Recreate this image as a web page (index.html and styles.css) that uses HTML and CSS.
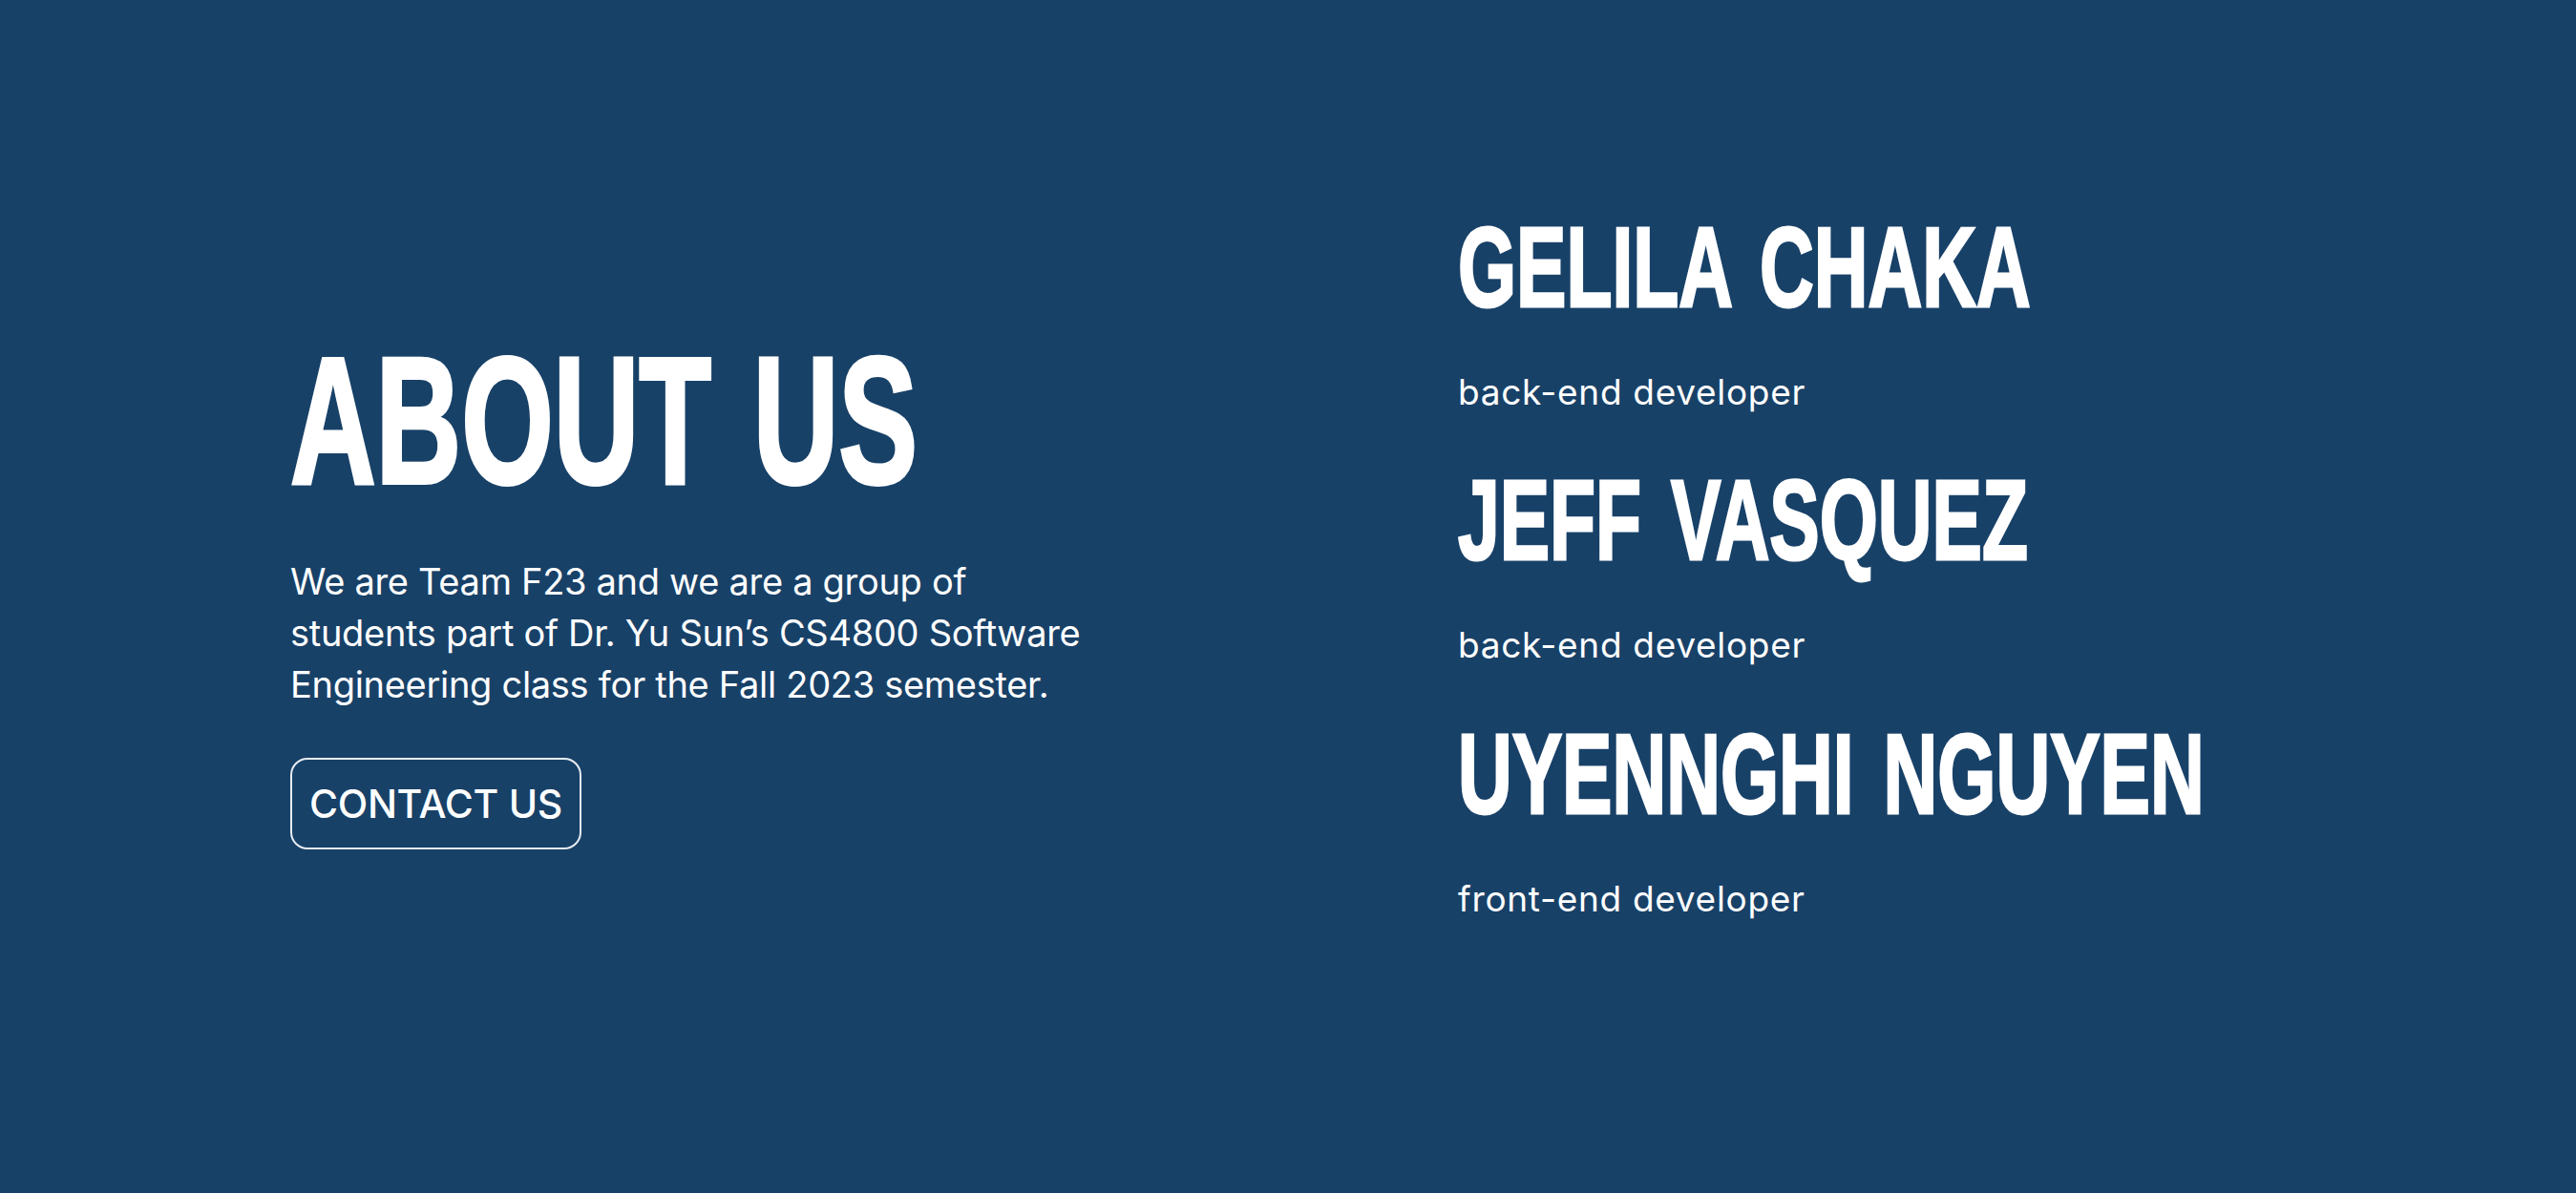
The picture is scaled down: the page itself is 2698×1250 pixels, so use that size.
FILE: index.html
```html
<!DOCTYPE html>
<html lang="en">
<head>
<meta charset="utf-8">
<title>About Us</title>
<link rel="stylesheet" href="styles.css">
</head>
<body>
<main class="about">
  <section class="intro">
    <h1 class="title"><span class="condensed">ABOUT US</span></h1>
    <p class="blurb">We are Team F23 and we are a group of students part of Dr. Yu Sun’s CS4800 Software Engineering class for the Fall 2023 semester.</p>
    <a class="contact" href="#">CONTACT US</a>
  </section>
  <section class="team">
    <div class="member">
      <h2 class="name"><span class="condensed">GELILA CHAKA</span></h2>
      <p class="role">back-end developer</p>
    </div>
    <div class="member">
      <h2 class="name"><span class="condensed">JEFF VASQUEZ</span></h2>
      <p class="role">back-end developer</p>
    </div>
    <div class="member">
      <h2 class="name"><span class="condensed">UYENNGHI NGUYEN</span></h2>
      <p class="role">front-end developer</p>
    </div>
  </section>
</main>
</body>
</html>
```
FILE: styles.css
```css
html, body {
  margin: 0;
  padding: 0;
}
body {
  background: #184168;
  color: #ffffff;
  font-family: "Inter", "Noto Sans", sans-serif;
  width: 2698px;
  height: 1250px;
  overflow: hidden;
}
.about {
  display: flex;
  padding-left: 304px;
  height: 1250px;
  box-sizing: border-box;
}
.intro {
  width: 1223px;
  flex: none;
  padding-top: 342px;
  display: flex;
  flex-direction: column;
  align-items: flex-start;
}
.condensed {
  display: inline-block;
  white-space: nowrap;
  transform: scaleX(0.66);
  transform-origin: left center;
  font-family: "Liberation Sans", Arial, sans-serif;
  font-weight: 700;
  word-spacing: 14px;
}
.title {
  margin: 0;
  font-size: 190px;
  line-height: 1;
  font-weight: 700;
}
.title .condensed {
  -webkit-text-stroke: 4px #ffffff;
  transform: scaleX(0.653);
}
.blurb {
  margin: 47px 0 0;
  width: 852px;
  font-size: 38px;
  line-height: 54px;
  font-weight: 400;
  letter-spacing: -0.3px;
}
.contact {
  margin-top: 50px;
  display: inline-block;
  color: #ffffff;
  text-decoration: none;
  font-size: 41px;
  line-height: 48px;
  font-weight: 500;
  letter-spacing: -0.3px;
  padding: 22px 18px;
  border: 2px solid #e6ecf2;
  border-radius: 18px;
}
.team {
  padding-top: 219px;
  display: flex;
  flex-direction: column;
}
.member + .member {
  margin-top: 51px;
}
.name {
  margin: 0;
  font-size: 119px;
  line-height: 1;
  font-weight: 700;
}
.name .condensed {
  -webkit-text-stroke: 3px #ffffff;
}
.role {
  margin: 50px 0 0;
  font-size: 37px;
  line-height: 1.2;
  font-weight: 400;
  letter-spacing: 0.7px;
}
```
